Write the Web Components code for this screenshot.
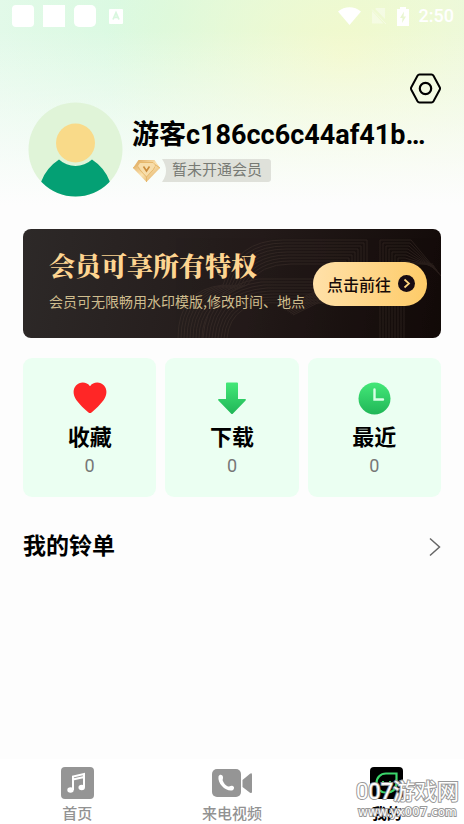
<!DOCTYPE html>
<html lang="zh-CN">
<head>
<meta charset="utf-8">
<meta name="viewport" content="width=device-width, initial-scale=1">
<title>我的</title>
<style>
html, body { margin: 0; min-height: 100%; }
body { background: #fdfdfd; font-family: Roboto, "Noto Sans CJK SC", sans-serif; color: #000; }
</style>
</head>
<body>
<profile-page></profile-page>
<script>
const define = (name, html) => {
  const template = document.createElement('template');
  template.innerHTML = '<style>*{box-sizing:border-box}svg{display:block;flex:none}button,a{font:inherit;color:inherit;text-decoration:none;border:0;padding:0;margin:0;background:none;cursor:pointer}</style>' + html;
  customElements.define(name, class extends HTMLElement {
    constructor() {
      super();
      this.attachShadow({ mode: 'open' }).append(template.content.cloneNode(true));
    }
  });
};

define('status-bar', `
<style>
:host { display: flex; align-items: center; justify-content: space-between; height: 32px; padding: 0 10px 0 12px; color: #fff; }
div { display: flex; align-items: center; }
.left { gap: 9px; }
.left svg:last-child { margin-left: 4px; }
.right { gap: 10px; }
span { font-size: 18px; line-height: 20px; font-weight: 500; }
</style>
<div class="left">
<svg width="22" height="22"><rect width="22" height="22" rx="4" fill="#fff"/></svg>
<svg width="22" height="22"><rect width="22" height="22" fill="#fff"/></svg>
<svg width="22" height="22"><rect width="22" height="22" rx="5" fill="#fff"/></svg>
<svg width="14" height="15" viewBox="0 0 14 15"><rect width="14" height="15" rx="1" fill="#fff"/><path d="M4 10.500 7 3.800l3 6.700M5.200 8.400h3.600" fill="none" stroke="#d9f7df" stroke-width="1.800"/></svg>
</div>
<div class="right">
<svg width="23" height="18" viewBox="0 0 23 18"><path d="M0 4.500C6.500-1.200 16.500-1.200 23 4.500L11.500 18z" fill="#fff"/></svg>
<svg width="16" height="18" viewBox="0 0 16 18" opacity=".4"><path d="M5 1h9v11L4.200 2zM1 4l11.500 12.500H1z" fill="#fff"/><path d="M1 2.500 15 17" stroke="#fff"/></svg>
<svg width="12" height="19" viewBox="0 0 12 19"><path d="M0 2h3V0h6v2h3v17H0z" fill="#fff"/><path d="M7 4.500 3 11h2.500L5 16l4-6.500H6.500z" fill="#e9f6d1"/></svg>
<span>2:50</span>
</div>`);

define('user-header', `
<style>
:host { display: block; padding: 41px 23px 0; }
.settings { display: block; margin-left: auto; }
.row { display: flex; align-items: center; gap: 9px; padding-left: 5px; margin-top: -2px; }
.info { flex: 1; min-width: 0; }
h1 { margin: 0; font-size: 27px; line-height: 36px; font-weight: 700; white-space: nowrap; }
.member { display: flex; align-items: center; margin-top: 6px; }
.tag { margin-left: 1px; height: 23px; padding: 0 9px 0 10px; font-size: 15px; line-height: 23px; color: #777a74; background: #dfe1da; border-radius: 0 3px 3px 0; clip-path: path("M0 0H107Q110 0 110 3V20Q110 23 107 23H0Q8 12 0 0Z"); }
</style>
<button class="settings" aria-label="设置"><svg width="31" height="31" viewBox="0 0 31 31" fill="none" stroke="#000" stroke-width="2"><path d="M9.500 1.500h12q1.300 0 2 1.200l6.200 11.500q.7 1.300 0 2.600l-6.200 11.500q-.7 1.200-2 1.200h-12q-1.300 0-2-1.200L1.300 16.800q-.7-1.300 0-2.600L7.500 2.700q.7-1.200 2-1.200z"/><circle cx="15.500" cy="15.500" r="5.700" stroke-width="2.200"/></svg></button>
<div class="row">
<svg width="95" height="95" viewBox="0 0 95 95"><defs><clipPath id="c"><circle cx="47.500" cy="47.500" r="47"/></clipPath></defs><circle cx="47.500" cy="47.500" r="47" fill="#e0f4d8"/><path clip-path="url(#c)" d="M31 57.500C40 66 55 66 64 57.500Q77 66 82 80V95H13V80Q18 66 31 57.500z" fill="#04a074"/><circle cx="47.500" cy="41" r="19.500" fill="#f9da89"/></svg>
<div class="info">
<h1>游客c186cc6c44af41b…</h1>
<div class="member">
<svg width="29" height="24" viewBox="0 0 29 24"><defs><linearGradient id="g" x2="1" y2="1"><stop stop-color="#dca253"/><stop offset=".5" stop-color="#fae2af"/><stop offset="1" stop-color="#d99c48"/></linearGradient></defs><path d="M6.500 1h16L28 9 14.500 23 1 9z" fill="url(#g)"/><path d="M1 9 5.500 6 8 3.500h13L23.500 6 28 9M5.500 6l2 4.500L14.500 18l7-7.500 2-4.500M14.500 18v5" fill="none" stroke="#e6b86c"/><path d="M8 4h13l2 3-8.500 10L6 7z" fill="#f7ddaa"/><path d="M11.500 7.500 14.500 12l3-4.500" fill="none" stroke="#cb8c3b" stroke-width="1.600"/></svg>
<span class="tag">暂未开通会员</span>
</div>
</div>
</div>`);

const nested = (count, make) => Array.from({ length: count }, (_, i) => '<path d="' + make(i * 3) + '"/>').join('');
const rings = nested(9, n => `M${270 - n / 2} ${86 - n / 3}L${344 - n} ${50}V${11 + n}H${260 + n / 3}Q${213 + n} ${11 + n} ${200 + n} 56`);
const digit = nested(9, n => `M${357 + n} 109V${11 + n}H${388 - n / 3}L${418 - n / 3} ${47 - n / 2}`);
const waves = nested(9, n => `M${155 + n} 109Q${155 + n} ${61 + n / 2} ${200 + n} 56M${180 + n} 109Q${184 + n} ${58 + n / 2} ${235 + n} ${50 + n}H340`);

define('vip-banner', `
<style>
:host { display: grid; margin: 32px 23px 0; border-radius: 8px; overflow: hidden; background: linear-gradient(100deg, #2d2928, #231a19 55%, #120a08); }
svg.art { grid-area: 1 / 1; width: 100%; height: 109px; }
.body { grid-area: 1 / 1; z-index: 1; display: flex; align-items: center; justify-content: space-between; padding: 0 14px 0 26px; min-height: 109px; }
.copy { white-space: nowrap; padding-bottom: 8px; }
h2 { margin: 0 0 6px; font: 900 26px/36px "Noto Serif CJK SC", "Noto Sans CJK SC", serif; color: #fed591; }
p { margin: 0; font: 14px/24px "Noto Sans CJK SC", sans-serif; color: #cfbd8e; }
button { display: flex; flex: none; align-items: center; gap: 7px; height: 44px; padding: 0 12px 0 14px; border-radius: 22px; background: linear-gradient(95deg, #ffe1aa, #fecb67); color: #170b09; font-size: 16px; font-weight: 500; white-space: nowrap; }
</style>
<svg class="art" viewBox="0 0 418 109" preserveAspectRatio="xMaxYMid slice" fill="none" stroke="#493a33" stroke-width="1" opacity=".4">${rings}${digit}${waves}</svg>
<div class="body">
<div class="copy"><h2>会员可享所有特权</h2><p>会员可无限畅用水印模版,修改时间、地点</p></div>
<button>点击前往<svg width="17" height="17" viewBox="0 0 17 17"><circle cx="8.500" cy="8.500" r="8.500" fill="#170b13"/><path d="m6.500 4.500 4.500 4-4.500 4" fill="none" stroke="#ffd57f" stroke-width="1.700"/></svg></button>
</div>`);

define('stat-card', `
<style>
:host { display: block; }
a { display: flex; flex-direction: column; align-items: center; height: 139px; padding-top: 24px; border-radius: 9px; background: #ebfff2; }
.label { margin-top: 7px; font-size: 22px; line-height: 32px; font-weight: 700; }
.count { font-size: 18px; line-height: 24px; color: #777; }
</style>
<a href="#"><slot name="icon"></slot><span class="label"><slot></slot></span><span class="count"><slot name="count"></slot></span></a>`);

define('list-link', `
<style>
:host { display: block; margin: 32px 23px 0; }
a { display: flex; align-items: center; justify-content: space-between; font-size: 23px; line-height: 36px; font-weight: 700; }
</style>
<a href="#"><slot></slot><svg width="12" height="20" viewBox="0 0 12 20"><path d="m1 1.500 9.500 8.500L1 18.500" fill="none" stroke="#666" stroke-width="1.500"/></svg></a>`);

define('nav-item', `
<style>
:host { display: block; color: #929292; }
:host([current]) { color: #000; }
a { display: flex; flex-direction: column; align-items: center; }
span { margin-top: 4px; font-size: 15px; line-height: 22px; font-weight: 500; }
:host([current]) span { font-weight: 700; }
</style>
<a href="#"><slot name="icon"></slot><span><slot></slot></span></a>`);

define('site-mark', `
<style>
:host { position: absolute; right: 5px; bottom: 4px; display: block; text-align: center; white-space: nowrap; color: #fff; pointer-events: none; }
b, span { display: block; font-weight: 400; paint-order: stroke fill; -webkit-text-stroke: 2px #999; }
b { font-size: 22px; line-height: 24px; }
span { font-family: "DejaVu Sans", sans-serif; font-size: 12px; line-height: 16px; }
</style>
<b>007游戏网</b><span>www.yx007.com</span>`);

define('profile-page', `
<style>
:host { display: flex; flex-direction: column; min-height: 100vh; position: relative; background:
 linear-gradient(to bottom, #fdfdfd00 30px, #fdfdfd80 120px, #fdfdfd 205px),
 radial-gradient(ellipse 240px 220px at 345px 55px, #f2f9cc, #f2f9cc00),
 radial-gradient(ellipse 270px 260px at 170px 15px, #d8f9e0, #d8f9e000),
 linear-gradient(100deg, #e8faee, #e6fae4 60%, #edf7e6) #fdfdfd; }
.stats { display: grid; grid-template-columns: repeat(3, 1fr); gap: 9px; margin: 20px 23px 0; }
nav { display: grid; grid-template-columns: repeat(3, 1fr); margin-top: auto; height: 65px; padding-top: 8px; background: #fff; }
</style>
<status-bar></status-bar>
<user-header></user-header>
<vip-banner></vip-banner>
<div class="stats">
<stat-card><svg slot="icon" width="34" height="33" viewBox="0 0 34 33"><path d="M17 4.300C20-.2 27-.8 31 3.500c3.500 4 3 10-.3 14.500C27.500 22.500 22.500 27 18.500 30.500q-1.500 1.200-3 0C11.500 27 6.500 22.500 3.300 18 0 13.500-.5 7.500 3 3.500 7-.8 14-.2 17 4.300z" fill="#ff2626"/></svg>收藏<span slot="count">0</span></stat-card>
<stat-card><svg slot="icon" width="30" height="33" viewBox="0 0 30 33"><defs><linearGradient id="d" x2="0" y2="1"><stop stop-color="#43e878"/><stop offset="1" stop-color="#20b657"/></linearGradient></defs><path d="M10 .5h10q1 0 1 1V17h7q1.800.2.600 1.600L16 31.500q-1 1-2 0L1.400 18.600Q.2 17.200 2 17h7V1.500q0-1 1-1z" fill="url(#d)"/></svg>下载<span slot="count">0</span></stat-card>
<stat-card><svg slot="icon" width="33" height="33" viewBox="0 0 33 33"><defs><linearGradient id="t" x2="0" y2="1"><stop stop-color="#43e878"/><stop offset="1" stop-color="#20b657"/></linearGradient></defs><circle cx="16.500" cy="16.500" r="16" fill="url(#t)"/><path d="M16.500 7.500v10H25" fill="none" stroke="#d8ffe5" stroke-width="2.400" stroke-linecap="round"/></svg>最近<span slot="count">0</span></stat-card>
</div>
<list-link>我的铃单</list-link>
<nav>
<nav-item><svg slot="icon" width="33" height="32" viewBox="0 0 33 32"><rect width="33" height="32" rx="4" fill="#959595"/><g fill="none" stroke="#fff" stroke-width="2"><path d="M12 23V9.500L23 7v13.500M12 12.500 23 10"/></g><ellipse cx="9.500" cy="23" rx="3.200" ry="2.800" fill="#fff"/><ellipse cx="20.700" cy="20.500" rx="3.200" ry="2.800" fill="#fff"/></svg>首页</nav-item>
<nav-item><svg slot="icon" width="40" height="32" viewBox="0 0 40 32"><rect y="2" width="29" height="28" rx="5" fill="#959595"/><path d="M30.500 13 38 6.700q2-1 2 1v17q0 2-2 1L30.500 20z" fill="#959595"/><path d="M6.500 9.500c1-2.500 4-2 4.500.5.200 2-.7 2.500-.2 3.800 1 2.700 2.700 4.500 5.200 5.700 1.200.5 2-1 4-.7 2.600.4 2.700 3 .7 4.500-6 2-15.500-6.300-14.200-13.800z" fill="#fff"/></svg>来电视频</nav-item>
<nav-item current><svg slot="icon" width="33" height="32" viewBox="0 0 33 32"><rect width="33" height="32" rx="4" fill="#000"/><path d="M16 6.500h10.500V16c0 13-20 13-20 0 0-5.500 4-9.500 9.500-9.500z" fill="none" stroke="#3bd66b" stroke-width="2.200"/><path d="M13 14v5M20 14v5" stroke="#3bd66b" stroke-width="2"/></svg>我的</nav-item>
</nav>
<site-mark></site-mark>`);
</script>
</body>
</html>
